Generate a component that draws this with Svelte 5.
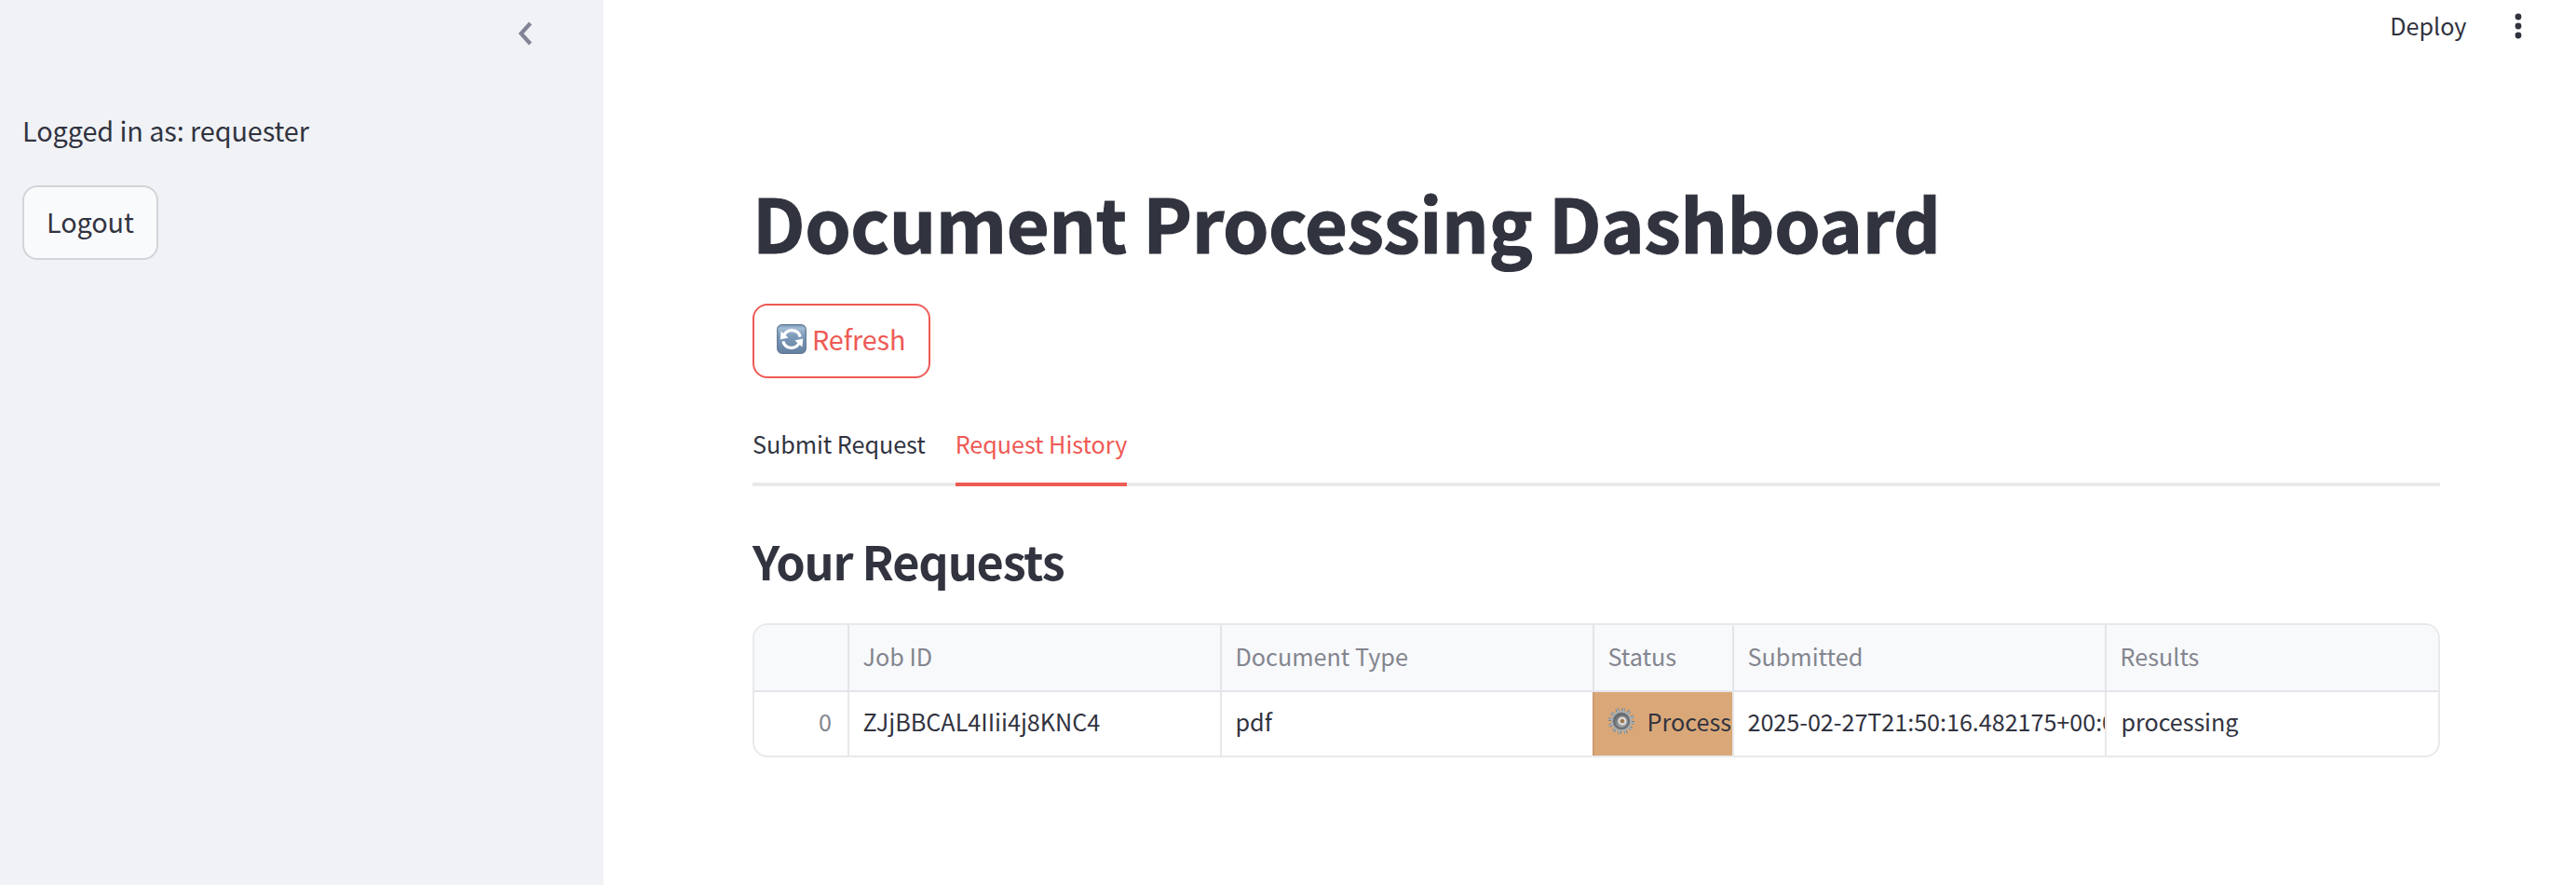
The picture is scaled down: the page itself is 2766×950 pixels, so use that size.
<script>
  const columns = [
    { key: 'id', label: 'Job ID' },
    { key: 'type', label: 'Document Type' },
    { key: 'status', label: 'Status' },
    { key: 'submitted', label: 'Submitted' },
    { key: 'results', label: 'Results' }
  ];
  const rows = [
    {
      id: 'ZJjBBCAL4IIii4j8KNC4',
      type: 'pdf',
      status: 'Processing',
      submitted: '2025-02-27T21:50:16.482175+00:00',
      results: 'processing'
    }
  ];
</script>

<div class="app">
  <aside>
    <div class="collapse">
      <svg width="16" height="26" viewBox="0 0 16 26"><path d="M13.5 2 L3.5 13 L13.5 24" fill="none" stroke="#808495" stroke-width="4.2" /></svg>
    </div>
    <p class="user">Logged in as: requester</p>
    <button class="logout">Logout</button>
  </aside>

  <main>
    <header>
      <span class="deploy">Deploy</span>
      <svg width="8" height="28" viewBox="0 0 8 28" fill="#31333f"><circle cx="4" cy="4" r="3.4" /><circle cx="4" cy="14" r="3.4" /><circle cx="4" cy="24" r="3.4" /></svg>
    </header>

    <section>
      <h1>Document Processing Dashboard</h1>
      <button class="refresh">
        <svg width="32" height="32" viewBox="0 0 32 32">
          <defs>
            <linearGradient id="tile" x1="0" y1="0" x2="0" y2="1">
              <stop offset="0" stop-color="#7f9dbd" /><stop offset=".12" stop-color="#a3bbd3" /><stop offset=".4" stop-color="#7d9abb" /><stop offset="1" stop-color="#64809f" />
            </linearGradient>
          </defs>
          <rect x=".7" y=".7" width="30.6" height="30.6" rx="5" fill="url(#tile)" stroke="#5f7893" stroke-width="1.2" />
          <g fill="none" stroke="#fff" stroke-width="3.2">
            <path d="M7.600 12.5 A9.300 9.300 0 0 1 25.200 13.600" />
            <path d="M24.400 19.5 A9.300 9.300 0 0 1 6.800 18.400" />
          </g>
          <path d="M4.600 7.600 L3.800 16.600 L12.600 14.600 Z" fill="#fff" />
          <path d="M28.200 15.400 L19.400 17.400 L27.400 24.400 Z" fill="#fff" />
        </svg>
        <span>Refresh</span>
      </button>

      <nav>
        <span class="tab">Submit Request</span>
        <span class="tab active">Request History</span>
      </nav>

      <h2>Your Requests</h2>

      <div class="table">
        <div class="row head">
          <div class="cell"></div>
          {#each columns as c}
            <div class="cell">{c.label}</div>
          {/each}
        </div>
        {#each rows as r, i}
          <div class="row">
            <div class="cell index">{i}</div>
            {#each columns as c}
              <div class="cell {c.key}">
                {#if c.key === 'status'}
                  <svg width="28" height="28" viewBox="-14 -14 28 28">
                    <defs>
                      <linearGradient id="steel" x1="0" y1="0" x2=".6" y2="1"><stop offset="0" stop-color="#5f6265" /><stop offset="1" stop-color="#a4a7a9" /></linearGradient>
                    </defs>
                    <circle r="12.2" fill="none" stroke="#73777b" stroke-width="3.6" stroke-dasharray="3.3 3.088" />
                    <circle r="12.2" fill="none" stroke="#a9b0b5" stroke-width="3.6" stroke-dasharray="2 4.388" transform="rotate(4)" />
                    <circle r="10.2" fill="#808488" stroke="#a9afb3" stroke-width="1.6" />
                    <circle r="7.8" fill="url(#steel)" stroke="#626669" stroke-width="1.4" />
                    <circle cx=".8" r="3.6" fill="#c39a70" stroke="#dde0e2" stroke-width="2" />
                    <circle cx="1" r="1.7" fill="#8a6f52" />
                  </svg>
                {/if}
                <span>{r[c.key]}</span>
              </div>
            {/each}
          </div>
        {/each}
      </div>
    </section>
  </main>
</div>

<style>
  :global(body) { background: #fff; }
  .app {
    display: flex;
    height: 950px;
    overflow: hidden;
    color: #31333f;
    font-family: "Noto Sans CJK SC", sans-serif;
    font-size: 28.8px;
    line-height: 48px;
    white-space: nowrap;
  }
  svg { display: block; flex: none; }
  p, h1, h2 { margin: 0; }
  button {
    display: flex;
    align-items: center;
    box-sizing: border-box;
    height: 80px;
    padding: 0 24px 3px;
    border: 2px solid #d2d4d9;
    border-radius: 16px;
    background: #f9fafc;
    color: inherit;
    font: inherit;
  }
  aside {
    flex: none;
    box-sizing: border-box;
    width: 648px;
    padding: 23px 24px 0;
    background: #f0f2f6;
  }
  .collapse { display: flex; justify-content: flex-end; height: 93px; padding-right: 52px; }
  .user { margin-bottom: 35px; letter-spacing: -0.08px; }
  .logout { width: 146px; letter-spacing: -0.1px; }
  main { flex: 1; min-width: 0; }
  header {
    display: flex;
    justify-content: flex-end;
    align-items: flex-start;
    gap: 51.5px;
    box-sizing: border-box;
    height: 120px;
    padding: 14px 58px 0 0;
    font-size: 25.2px;
  }
  .deploy { line-height: 26px; }
  section { padding: 0 146px 0 160px; }
  h1 {
    padding-top: 69.5px;
    font-size: 79.2px;
    line-height: 96px;
    font-weight: 700;
    letter-spacing: -0.38px;
    -webkit-text-stroke: 1.2px #31333f;
  }
  .refresh {
    gap: 6px;
    width: 191px;
    margin-top: 40.5px;
    padding: 0 24px 5px;
    border-color: #ee5a54;
    background: #fff;
    color: #ee5a54;
    letter-spacing: -0.1px;
  }
  nav {
    display: flex;
    gap: 32px;
    height: 80px;
    margin-top: 36px;
    font-size: 25.2px;
    letter-spacing: -0.06px;
    box-shadow: inset 0 -4px #e9e9ea;
  }
  .tab { box-sizing: border-box; height: 80px; padding-top: 10px; }
  .active { color: #ee5a54; border-bottom: 4px solid #ee5a54; }
  h2 {
    margin-top: 46px;
    font-size: 50.4px;
    line-height: 68px;
    font-weight: 600;
    letter-spacing: -1.15px;
  }
  .table {
    margin-top: 33px;
    border: 2px solid #e9e9ea;
    border-radius: 16px;
    overflow: hidden;
    font-size: 25.2px;
  }
  .row { display: grid; grid-template-columns: 102px 400px 400px 150px 400px 1fr; height: 68px; }
  .head { height: 70px; background: #f8f9fb; color: #83858e; border-bottom: 2px solid #e4e5ea; }
  .cell {
    display: flex;
    align-items: center;
    box-sizing: border-box;
    min-width: 0;
    overflow: hidden;
    padding: 0 0 6px 14.5px;
    border-right: 2px solid #e8e8ea;
  }
  .head .cell { padding-bottom: 4px; border-color: #e4e5e9; }
  .cell:last-child { border-right: 0; }
  .index { justify-content: flex-end; padding-right: 17px; color: #83858e; }
  .status { gap: 14px; margin-left: -2px; border-left: 2px solid #cb9a6f; background: #daa878; }
  .submitted { letter-spacing: -0.05px; }
  .results { padding-left: 15.5px; letter-spacing: -0.08px; }
</style>
